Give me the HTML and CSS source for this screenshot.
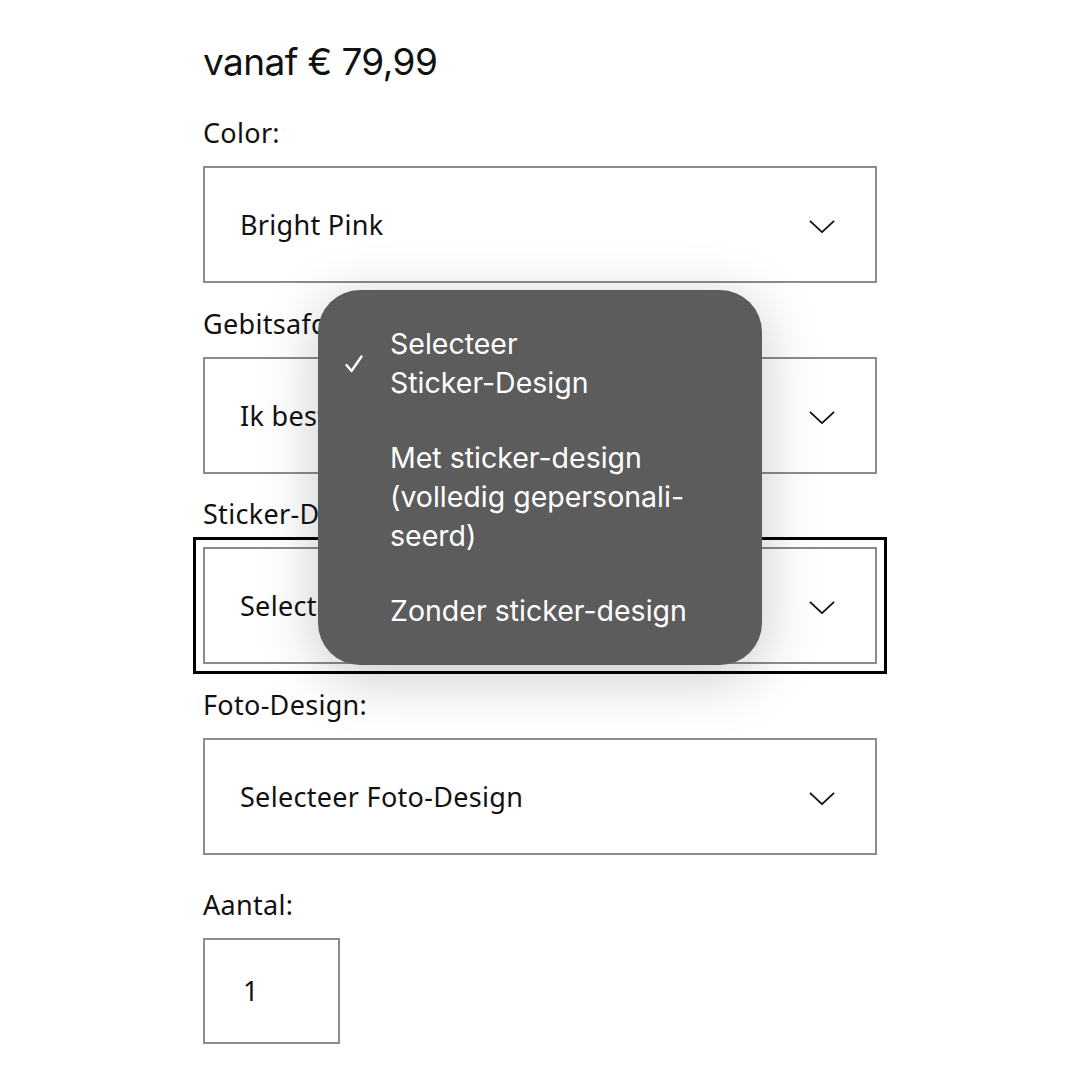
FILE: index.html
```html
<!DOCTYPE html>
<html lang="nl">
<head>
    <meta charset="UTF-8">
    <title>Product opties</title>
    <link rel="stylesheet" href="styles.css">
</head>
<body>
    <div class="product">
        <h2 class="price">vanaf € 79,99</h2>

        <div class="field">
            <label>Color:</label>
            <div class="select">
                <span>Bright Pink</span>
                <svg class="chev" viewBox="0 0 28 14"><polyline points="1,1 14,13 27,1"/></svg>
            </div>
        </div>

        <div class="field">
            <label>Gebitsafdruk:</label>
            <div class="select">
                <span>Ik bestel een afdrukset</span>
                <svg class="chev" viewBox="0 0 28 14"><polyline points="1,1 14,13 27,1"/></svg>
            </div>
        </div>

        <div class="field">
            <label>Sticker-Design:</label>
            <div class="select focus">
                <span>Selecteer Sticker-Design</span>
                <svg class="chev" viewBox="0 0 28 14"><polyline points="1,1 14,13 27,1"/></svg>
            </div>
        </div>

        <div class="field">
            <label>Foto-Design:</label>
            <div class="select">
                <span>Selecteer Foto-Design</span>
                <svg class="chev" viewBox="0 0 28 14"><polyline points="1,1 14,13 27,1"/></svg>
            </div>
        </div>

        <div class="field qty-field">
            <label>Aantal:</label>
            <div class="qty">1</div>
        </div>

        <ul class="picker">
            <li class="checked">
                <svg class="check" viewBox="0 0 18 18"><polyline points="1.5,10 6.5,16 16.5,1.5"/></svg>
                <span>Selecteer<br>Sticker-Design</span>
            </li>
            <li><span>Met sticker-design<br>(volledig gepersonali-<br>seerd)</span></li>
            <li><span>Zonder sticker-design</span></li>
        </ul>
    </div>
</body>
</html>
```

FILE: styles.css
```css
* {
    margin: 0;
    padding: 0;
    box-sizing: border-box;
}

body {
    background: #fff;
    color: #111;
    font-family: "Noto Sans", Lato, sans-serif;
}

.product {
    position: relative;
    width: 674px;
    margin-left: 203px;
    padding-top: 40px;
}

.price {
    font-family: Inter, sans-serif;
    font-weight: 400;
    font-size: 37px;
    line-height: 44px;
    letter-spacing: -0.6px;
    margin-bottom: 31px;
}

.field {
    display: flex;
    flex-direction: column;
    margin-bottom: 22.5px;
}

.field label {
    font-size: 27px;
    line-height: 36px;
    letter-spacing: 0.3px;
    margin-bottom: 15px;
}

.select {
    height: 117px;
    border: 2px solid #8c8c8c;
    display: flex;
    align-items: center;
    justify-content: space-between;
    padding: 0 40px 0 35px;
    font-size: 27px;
    letter-spacing: 0.3px;
}

.select.focus {
    outline: 3px solid #000;
    outline-offset: 7px;
}

.chev {
    width: 26px;
    height: 13px;
    margin-top: 4px;
    fill: none;
    stroke: #111;
    stroke-width: 2;
}

.qty-field {
    margin-top: 32px;
}

.qty {
    width: 137px;
    height: 106px;
    border: 2px solid #8c8c8c;
    display: flex;
    align-items: center;
    padding-left: 38px;
    font-size: 27px;
}

.picker {
    position: absolute;
    left: 115px;
    top: 290px;
    width: 444px;
    height: 375px;
    list-style: none;
    background: #5c5c5c;
    border-radius: 42px;
    box-shadow: 0 12px 60px rgba(0, 0, 0, 0.22);
    color: #fff;
    font-family: Inter, sans-serif;
    font-size: 28.5px;
    line-height: 39px;
    padding: 34px 30px 0 72px;
    display: flex;
    flex-direction: column;
    gap: 36px;
}

.picker li {
    position: relative;
}

.check {
    position: absolute;
    left: -45px;
    top: 31px;
    width: 18px;
    height: 18px;
    fill: none;
    stroke: #fff;
    stroke-width: 2.4;
    stroke-linecap: round;
    stroke-linejoin: round;
}
```
